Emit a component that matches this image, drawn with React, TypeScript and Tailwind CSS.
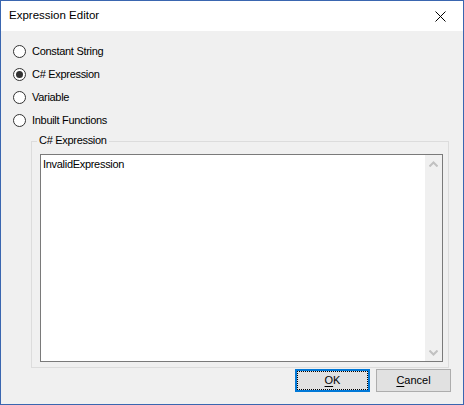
import { useState } from "react";

const options = ["Constant String", "C# Expression", "Variable", "Inbuilt Functions"];

function Radio({ label, checked, onSelect }: { label: string; checked: boolean; onSelect: () => void }) {
  return (
    <div className="flex h-[23px] items-center gap-[6px] cursor-default" onClick={onSelect}>
      <div className="flex h-[13px] w-[13px] items-center justify-center rounded-full border border-[#333333] bg-white">
        {checked && <div className="h-[7px] w-[7px] rounded-full bg-[#333333]" />}
      </div>
      <span className="text-[11px] leading-[13px] tracking-[-0.3px] text-black">{label}</span>
    </div>
  );
}

function Chevron({ up }: { up?: boolean }) {
  return (
    <svg width="9" height="6" viewBox="0 0 9 6" className={up ? "" : "rotate-180"}>
      <path d="M0.5 5.5 L4.5 1.5 L8.5 5.5" fill="none" stroke="#c1c1c1" strokeWidth="2" />
    </svg>
  );
}

export default function App() {
  const [selected, setSelected] = useState(1);

  return (
    <div className="box-border flex h-[405px] w-[464px] flex-col border border-[#3a66b0] bg-[#f0f0f0] font-['Liberation_Sans',Arial,sans-serif]">
      {/* title bar */}
      <div className="flex h-[30px] shrink-0 items-center justify-between bg-white">
        <span className="pl-[8px] text-[11.5px] text-black">Expression Editor</span>
        <div className="flex h-[30px] w-[46px] items-center justify-center">
          <svg width="11" height="11" viewBox="0 0 11 11">
            <path d="M0.5 0.5 L10.5 10.5 M10.5 0.5 L0.5 10.5" stroke="#000" strokeWidth="1" />
          </svg>
        </div>
      </div>

      <div className="flex flex-1 flex-col pt-[9px]">
        <div className="flex flex-col pl-[12px]">
          {options.map((o, i) => (
            <Radio key={o} label={o} checked={selected === i} onSelect={() => setSelected(i)} />
          ))}
        </div>

        {/* group box */}
        <div className="relative ml-[30px] mt-[9px] h-[227px] w-[418px] border border-[#dcdcdc]">
          <span className="absolute -top-[8px] left-[5px] bg-[#f0f0f0] px-[2px] text-[11px] leading-[13px] tracking-[-0.3px] text-black">
            C# Expression
          </span>
          <div className="ml-[8px] mt-[12px] flex h-[208px] w-[403px] border border-[#7a7a7a] bg-white">
            <div className="flex-1 pl-[2px] pt-[3px] text-[11px] leading-[13px] tracking-[-0.3px] text-black">
              InvalidExpression
            </div>
            <div className="flex w-[17px] flex-col justify-between bg-[#f0f0f0]">
              <div className="flex h-[17px] items-center justify-center">
                <Chevron up />
              </div>
              <div className="flex h-[17px] items-center justify-center">
                <Chevron />
              </div>
            </div>
          </div>
        </div>

        {/* buttons */}
        <div className="mt-[1px] flex justify-end gap-[6px] pr-[12px]">
          <button className="box-border flex h-[23px] w-[75px] items-center justify-center border-2 border-[#0078d7] bg-[#e1e1e1] p-[1px]">
            <span className="flex h-full w-full items-center justify-center outline-1 outline-dotted outline-black text-[11px] text-black">
              <span className="underline underline-offset-[2px]">O</span>K
            </span>
          </button>
          <button className="box-border flex h-[23px] w-[75px] items-center justify-center border border-[#adadad] bg-[#e1e1e1] text-[11px] text-black">
            <span>
              <span className="underline underline-offset-[2px]">C</span>ancel
            </span>
          </button>
        </div>
      </div>
    </div>
  );
}
